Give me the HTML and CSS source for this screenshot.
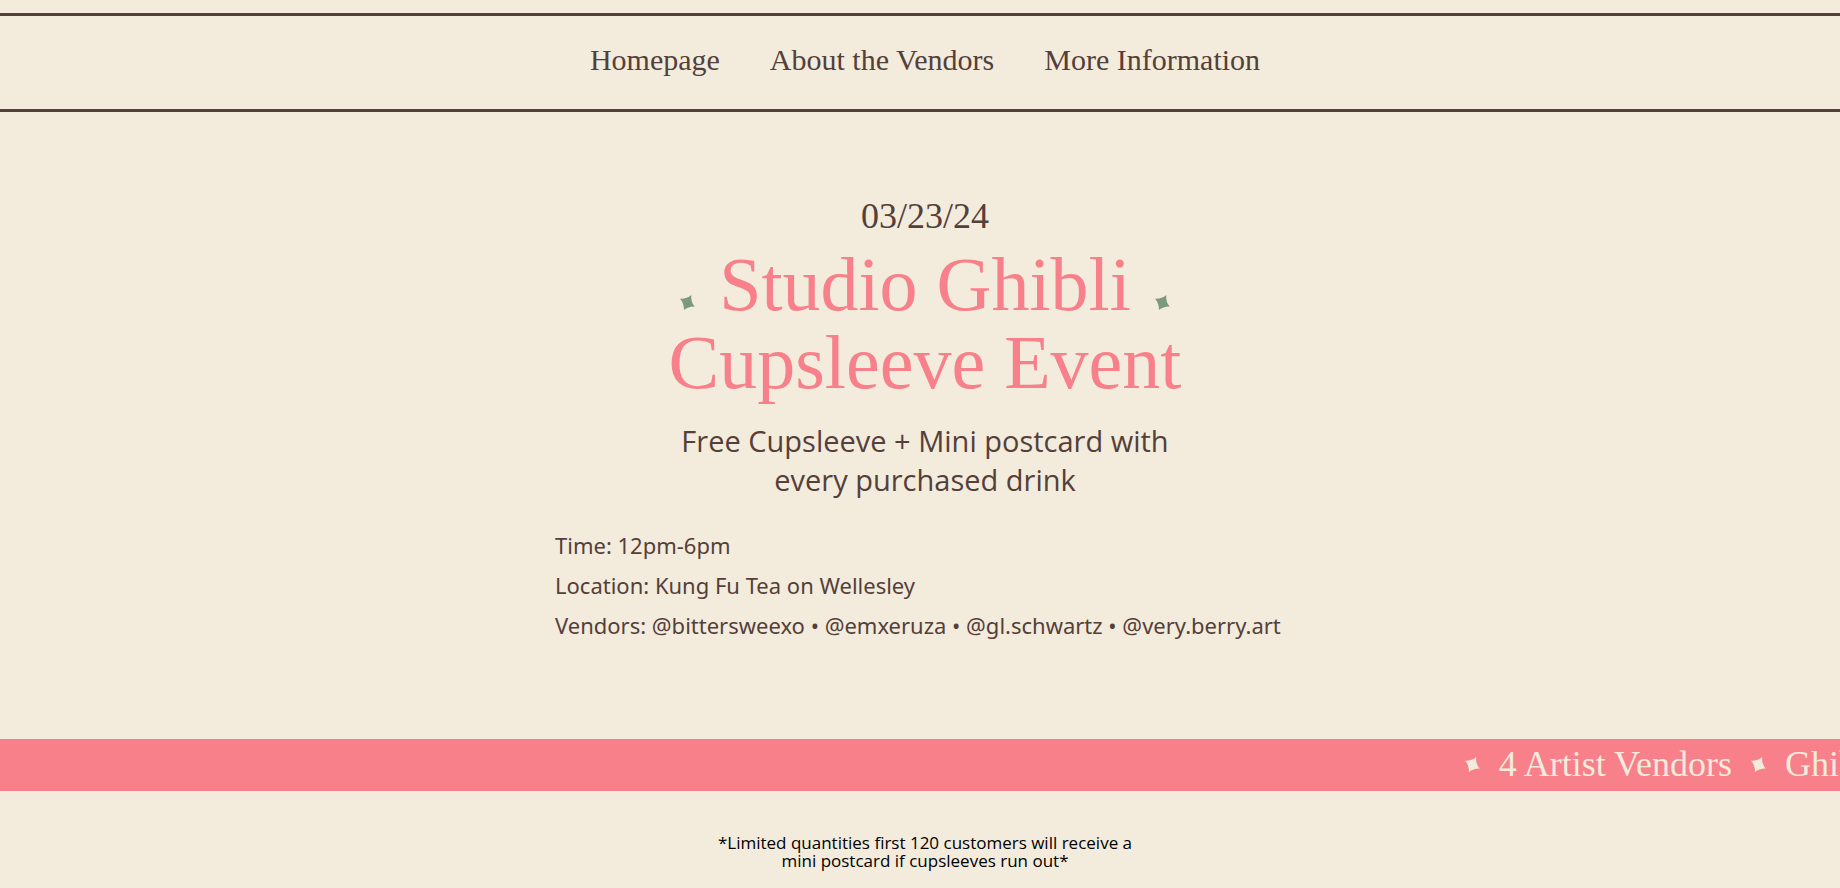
FILE: index.html
```html
<!DOCTYPE html>
<html lang="en">
<head>
<meta charset="utf-8">
<meta name="viewport" content="width=device-width, initial-scale=1">
<title>Studio Ghibli Cupsleeve Event</title>
<link rel="stylesheet" href="styles.css">
</head>
<body>
<svg class="symbols" aria-hidden="true">
  <symbol id="star" viewBox="0 0 15 15"><path d="M11.3 0 Q10.8 3.8 11.8 6.4 Q12.6 9.3 14.8 11.6 Q11 11.5 8.6 12.6 Q5.8 13.4 4 15 Q4 11.5 3 8.7 Q2.1 5.9 0 3.8 Q3.8 4 6.6 2.8 Q9.2 2 11.3 0Z" fill="currentColor"/></symbol>
</svg>
<header class="site-header">
  <nav class="nav" aria-label="Main">
    <a href="#home">Homepage</a>
    <a href="#vendors">About the Vendors</a>
    <a href="#info">More Information</a>
  </nav>
</header>
<main>
  <section class="hero" id="home">
    <p class="date">03/23/24</p>
    <h1 class="title">
      <span class="title-row"><svg class="star"><use href="#star"/></svg><span>Studio Ghibli</span><svg class="star"><use href="#star"/></svg></span>
      <span>Cupsleeve Event</span>
    </h1>
    <p class="offer">Free Cupsleeve + Mini postcard with every purchased drink</p>
    <div class="details" id="info">
      <p>Time: 12pm-6pm</p>
      <p>Location: Kung Fu Tea on Wellesley</p>
      <p id="vendors">Vendors: @bittersweexo • @emxeruza • @gl.schwartz • @very.berry.art</p>
    </div>
  </section>
  <section class="ticker" aria-label="Highlights">
    <div class="ticker-track">
      <svg class="star"><use href="#star"/></svg><span>4 Artist Vendors</span>
      <svg class="star"><use href="#star"/></svg><span>Ghibli</span>
    </div>
  </section>
</main>
<footer class="note">
  <p>*Limited quantities first 120 customers will receive a mini postcard if cupsleeves run out*</p>
</footer>
</body>
</html>
```

FILE: styles.css
```css
* { box-sizing: border-box; }

body {
  margin: 0;
  background: #f3ebdc;
  color: #543f3a;
  font-family: "Liberation Serif", serif;
}

p, h1 { margin: 0; }

.symbols { position: absolute; width: 0; height: 0; }

.star {
  flex: none;
  width: 15px;
  height: 15px;
}

.site-header {
  margin-top: 13px;
  padding: 26px 0 31px 10px;
  border-top: 3px solid;
  border-bottom: 3px solid;
}

.nav {
  display: flex;
  flex-wrap: wrap;
  justify-content: center;
  gap: 0 50px;
  font-size: 30px;
  line-height: 36px;
}

.nav a { color: inherit; text-decoration: none; }

.hero {
  display: flex;
  flex-direction: column;
  align-items: center;
  padding: 84px 0 100px 10px;
}

.date { font-size: 36px; line-height: 40px; }

.title {
  display: flex;
  flex-direction: column;
  align-items: center;
  padding-top: 9px;
  color: #f8808a;
  font-size: 76px;
  font-weight: 400;
  line-height: 78px;
}

.title-row {
  display: flex;
  align-items: baseline;
  gap: 24px;
}

.title .star { color: #7b997e; }

.offer {
  max-width: 520px;
  padding-top: 20px;
  font-family: "Open Sans", sans-serif;
  font-size: 29px;
  line-height: 39px;
  text-align: center;
}

.details {
  display: grid;
  gap: 12px;
  width: 740px;
  max-width: 100%;
  padding-top: 32px;
  font-family: "Noto Sans", sans-serif;
  font-size: 22px;
  line-height: 28px;
}

.ticker {
  overflow: hidden;
  padding-bottom: 2px;
  background: #f8808a;
  color: #f3ebdc;
  font-size: 36px;
  line-height: 50px;
}

.ticker-track {
  display: flex;
  align-items: center;
  gap: 19px;
  padding-left: 79.6%;
  white-space: nowrap;
}

.note {
  display: flex;
  justify-content: center;
  padding: 43px 0 16px 10px;
  color: #000;
  font-family: "Open Sans", sans-serif;
  font-size: 17px;
  line-height: 18px;
  text-align: center;
}

.note p { max-width: 425px; }
```
